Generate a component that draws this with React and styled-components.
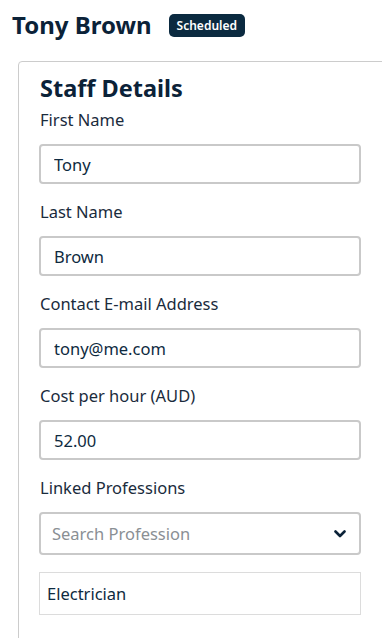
import React from "react";
import styled, { createGlobalStyle } from "styled-components";

const GlobalStyle = createGlobalStyle`
  body {
    margin: 0;
    overflow: hidden;
    background: #ffffff;
    font-family: "Noto Sans", "Open Sans", sans-serif;
    color: #0e2a40;
  }
`;

const Page = styled.div`
  width: 382px;
  height: 638px;
  overflow: hidden;
`;

const Header = styled.div`
  display: flex;
  align-items: center;
  gap: 17px;
  padding: 3px 12px 0 12px;
  height: 46px;
  box-sizing: border-box;
`;

const Title = styled.h1`
  margin: 0;
  font-size: 24px;
  font-weight: 700;
  color: #0b2238;
`;

const Badge = styled.span`
  display: inline-flex;
  align-items: center;
  height: 23px;
  padding: 0 8px;
  margin-top: 2px;
  border-radius: 5px;
  background: #0b2a40;
  color: #ffffff;
  font-size: 12px;
  font-weight: 600;
`;

const Card = styled.section`
  margin: 15px 0 0 18px;
  width: 400px;
  border: 1px solid #cccccc;
  border-radius: 4px 0 0 0;
  padding: 9px 20px 20px 20px;
  box-sizing: border-box;
  min-height: 600px;
`;

const CardTitle = styled.h2`
  margin: 0 0 4px 1px;
  font-size: 23.5px;
  font-weight: 700;
  color: #0b2238;
  line-height: 34px;
`;

const Field = styled.div`
  display: flex;
  flex-direction: column;
  width: 322px;
  margin-bottom: 17px;
`;

const Label = styled.label`
  font-size: 16.5px;
  line-height: 22px;
  color: #1a2b3c;
  margin: 0 0 13px 1px;
`;

const TextInput = styled.input`
  box-sizing: border-box;
  height: 40px;
  width: 100%;
  border: 2px solid #c9c9c9;
  border-radius: 4px;
  padding: 0 13px;
  font-family: inherit;
  font-size: 16.5px;
  color: #0e2a40;
  background: #fff;
  outline: none;
`;

const SelectBox = styled.div`
  box-sizing: border-box;
  height: 43px;
  width: 100%;
  border: 2px solid #c9c9c9;
  border-radius: 4px;
  padding: 0 13px 0 11px;
  display: flex;
  align-items: center;
  justify-content: space-between;
  font-size: 16.5px;
  color: #8a8f94;
`;

const Chip = styled.div`
  box-sizing: border-box;
  margin-top: 17px;
  height: 43px;
  width: 100%;
  border: 1px solid #dcdcdc;
  padding: 0 7px;
  display: flex;
  align-items: center;
  font-size: 16.5px;
  color: #0e2a40;
`;

const Chevron = () => (
  <svg width="12" height="8" viewBox="0 0 12 8">
    <path d="M1.5 1.5 L6 6 L10.5 1.5" fill="none" stroke="#0b2238" strokeWidth="2.6" strokeLinecap="round" strokeLinejoin="round" />
  </svg>
);

const fields = [
  { label: "First Name", value: "Tony" },
  { label: "Last Name", value: "Brown" },
  { label: "Contact E-mail Address", value: "tony@me.com" },
  { label: "Cost per hour (AUD)", value: "52.00" },
];

export default function App() {
  return (
    <Page>
      <GlobalStyle />
      <Header>
        <Title>Tony Brown</Title>
        <Badge>Scheduled</Badge>
      </Header>
      <Card>
        <CardTitle>Staff Details</CardTitle>
        {fields.map((f) => (
          <Field key={f.label}>
            <Label>{f.label}</Label>
            <TextInput defaultValue={f.value} />
          </Field>
        ))}
        <Field>
          <Label>Linked Professions</Label>
          <SelectBox>
            <span>Search Profession</span>
            <Chevron />
          </SelectBox>
          <Chip>Electrician</Chip>
        </Field>
      </Card>
    </Page>
  );
}
